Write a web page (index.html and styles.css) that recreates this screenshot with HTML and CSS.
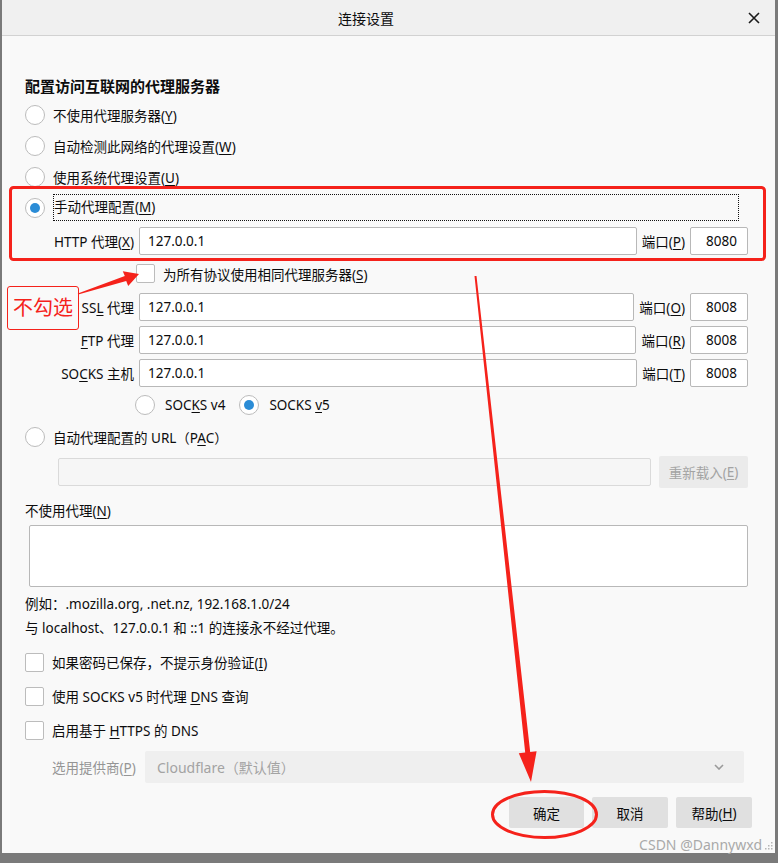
FILE: index.html
```html
<!DOCTYPE html>
<html lang="zh-CN">
  <head>
    <meta charset="UTF-8" />
    <meta name="viewport" content="width=device-width, initial-scale=1.0" />
    <title>连接设置</title>
    <link rel="stylesheet" href="styles.css">
  </head>
  <body>
    <div class="dialog">
      <div class="titlebar">
        <div class="title">连接设置</div>
        <svg class="close" width="12" height="12" viewBox="0 0 12 12">
          <path d="M1 1 L11 11 M11 1 L1 11" stroke="#1b1b1b" stroke-width="1.6" fill="none" />
        </svg>
      </div>

      <div class="content">
        <div class="heading">配置访问互联网的代理服务器</div>

        <div class="radio-row"><span class="radio"></span><span>不使用代理服务器(<u>Y</u>)</span></div>
        <div class="radio-row"><span class="radio"></span><span>自动检测此网络的代理设置(<u>W</u>)</span></div>
        <div class="radio-row"><span class="radio"></span><span>使用系统代理设置(<u>U</u>)</span></div>
        <div class="radio-row"><span class="radio checked"></span><span class="focused">手动代理配置(<u>M</u>)</span></div>

        <div class="field-row first">
          <span class="field-label">HTTP 代理(<u>X</u>)</span>
          <div class="input">127.0.0.1</div>
          <span class="port-label">端口(<u>P</u>)</span>
          <div class="input port">8080</div>
        </div>
        <div class="share-row"><span class="checkbox"></span><span>为所有协议使用相同代理服务器(<u>S</u>)</span></div>
        <div class="field-row">
          <span class="field-label">SS<u>L</u> 代理</span>
          <div class="input">127.0.0.1</div>
          <span class="port-label">端口(<u>O</u>)</span>
          <div class="input port">8008</div>
        </div>
        <div class="field-row">
          <span class="field-label"><u>F</u>TP 代理</span>
          <div class="input">127.0.0.1</div>
          <span class="port-label">端口(<u>R</u>)</span>
          <div class="input port">8008</div>
        </div>
        <div class="field-row">
          <span class="field-label">SO<u>C</u>KS 主机</span>
          <div class="input">127.0.0.1</div>
          <span class="port-label">端口(<u>T</u>)</span>
          <div class="input port">8008</div>
        </div>
        <div class="socks-row">
          <span class="radio"></span><span>SOC<u>K</u>S v4</span>
          <span class="radio checked v5"></span><span>SOCKS <u>v</u>5</span>
        </div>

        <div class="radio-row pac"><span class="radio"></span><span>自动代理配置的 URL（P<u>A</u>C）</span></div>
        <div class="pac-row">
          <div class="input disabled"></div>
          <div class="button disabled">重新载入(<u>E</u>)</div>
        </div>

        <div class="label">不使用代理(<u>N</u>)</div>
        <div class="textarea"></div>
        <div class="note">例如：.mozilla.org, .net.nz, 192.168.1.0/24</div>
        <div class="note">与 localhost、127.0.0.1 和 ::1 的连接永不经过代理。</div>

        <div class="check-row first"><span class="checkbox"></span><span>如果密码已保存，不提示身份验证(<u>I</u>)</span></div>
        <div class="check-row"><span class="checkbox"></span><span>使用 SOCKS v5 时代理 <u>D</u>NS 查询</span></div>
        <div class="check-row"><span class="checkbox"></span><span>启用基于 <u>H</u>TTPS 的 DNS</span></div>

        <div class="provider-row">
          <span class="provider-label">选用提供商(<u>P</u>)</span>
          <div class="select">
            <span>Cloudflare（默认值）</span>
            <svg width="10" height="6" viewBox="0 0 10 6"><path d="M1 1 L5 5 L9 1" stroke="#9a9a9a" stroke-width="1.6" fill="none" /></svg>
          </div>
        </div>

        <div class="buttons">
          <div class="button">确定</div>
          <div class="button">取消</div>
          <div class="button">帮助(<u>H</u>)</div>
        </div>
      </div>
    </div>

    <!-- annotations drawn over the screenshot -->
    <svg class="marks" width="778" height="863" viewBox="0 0 778 863">
      <rect x="10.5" y="187.5" width="754" height="72" rx="3" fill="none" stroke="#f5221b" stroke-width="3" />
      <polygon fill="#f5221b" points="77.8,293.5 124.8,276.1 122.8,271.3 139,274 128.2,285.9 126.2,281.1 78.2,294.5" />
      <polygon fill="#f5221b" points="474.5,276.1 476.5,275.9 530.2,751.9 536.6,751.2 531,782 518.8,753.2 525.2,752.5" />
      <ellipse cx="544.5" cy="814.5" rx="52" ry="23" fill="none" stroke="#f5221b" stroke-width="3" />
    </svg>
    <div class="tag">不勾选</div>
    <div class="watermark">
      CSDN @Dannywxd
      <svg width="8" height="9" viewBox="0 0 8 9">
        <rect x="6" y="1" width="1.5" height="1.5" fill="#b5b5b5" />
        <rect x="3" y="4" width="1.5" height="1.5" fill="#b5b5b5" />
        <rect x="6" y="4" width="1.5" height="1.5" fill="#b5b5b5" />
        <rect x="0" y="7" width="1.5" height="1.5" fill="#b5b5b5" />
        <rect x="3" y="7" width="1.5" height="1.5" fill="#b5b5b5" />
        <rect x="6" y="7" width="1.5" height="1.5" fill="#b5b5b5" />
      </svg>
    </div>
  </body>
</html>
```

FILE: styles.css
```css
* {
  box-sizing: border-box;
}

body {
  margin: 0;
  width: 778px;
  height: 863px;
  position: relative;
  overflow: hidden;
  background-color: #7a7a7a;
  font-family: "Noto Sans", "Noto Sans CJK SC", sans-serif;
  font-size: 13.5px;
  color: #0c0c0d;
}

u {
  text-underline-offset: 2px;
}

.dialog {
  margin-left: 2px;
  width: 773px;
  height: 853px;
  background-color: #f9f9f9;
  overflow: hidden;
}

.titlebar {
  height: 36px;
  display: flex;
  align-items: center;
  justify-content: center;
  padding-right: 45px;
  background-color: #f0f0f0;
  border-bottom: 1px solid #d2d2d2;
  position: relative;
}

.title {
  font-size: 14px;
  font-family: "Noto Sans CJK SC", sans-serif;
}

.close {
  position: absolute;
  right: 15px;
  top: 12px;
}

.content {
  padding: 0 27px 0 23px;
  display: flex;
  flex-direction: column;
}

.heading {
  margin-top: 40px;
  line-height: 20px;
  font-size: 15px;
  font-weight: 600;
}

.radio-row {
  height: 31px;
  display: flex;
  align-items: center;
}

.heading + .radio-row {
  margin-top: 3px;
}

.radio-row.pac {
  height: 32px;
}

.radio {
  width: 20px;
  height: 20px;
  flex: none;
  border: 1px solid #bcbcbc;
  border-radius: 50%;
  background-color: #fff;
  margin-right: 8px;
  display: flex;
  align-items: center;
  justify-content: center;
}

.radio.checked::after {
  content: "";
  width: 10px;
  height: 10px;
  border-radius: 50%;
  background-color: #2b8cd6;
}

.focused {
  flex: 1;
  height: 27px;
  line-height: 25px;
  margin-right: 9px;
  border: 1px dotted #111;
}

.field-row {
  height: 33px;
  display: flex;
  align-items: center;
  padding-left: 28px;
}

.field-row.first {
  margin-top: 1px;
}

.field-label {
  width: 81px;
  text-align: right;
  margin-right: 5px;
  white-space: nowrap;
}

.input {
  flex: 1;
  height: 28px;
  line-height: 26px;
  padding: 0 8px;
  background-color: #fff;
  border: 1px solid #b8b8b8;
  border-radius: 2px;
}

.input.port {
  flex: none;
  width: 58px;
  text-align: right;
  padding-right: 10px;
}

.port-label {
  margin: 0 5px;
  white-space: nowrap;
}

.share-row {
  height: 33px;
  display: flex;
  align-items: center;
  padding-left: 111px;
}

.checkbox {
  width: 19px;
  height: 19px;
  flex: none;
  background-color: #fff;
  border: 1px solid #bcbcbc;
  border-radius: 2px;
  margin-right: 8px;
}

.socks-row {
  height: 32px;
  display: flex;
  align-items: center;
  padding-left: 110px;
}

.socks-row .radio {
  margin-right: 10px;
}

.socks-row .radio.v5 {
  margin-left: 14px;
}

.pac-row {
  height: 38px;
  display: flex;
  align-items: center;
  padding-left: 33px;
}

.input.disabled {
  background-color: #f6f6f6;
  border-color: #dadada;
  margin-right: 8px;
}

.button {
  height: 31px;
  display: flex;
  align-items: center;
  justify-content: center;
  background-color: #e0e0e0;
  border-radius: 2px;
  white-space: nowrap;
}

.button.disabled {
  width: 89px;
  height: 32px;
  background-color: #ebebeb;
  color: #a3a3a3;
}

.label {
  margin-top: 10px;
  line-height: 20px;
}

.textarea {
  margin: 4px 0 0 4px;
  height: 62px;
  background-color: #fff;
  border: 1px solid #b8b8b8;
  border-radius: 2px;
}

.note {
  line-height: 24px;
}

.textarea + .note {
  margin-top: 5px;
}

.check-row {
  height: 34px;
  display: flex;
  align-items: center;
}

.check-row.first {
  margin-top: 5px;
}

.provider-row {
  height: 40px;
  display: flex;
  align-items: center;
  padding-left: 27px;
  margin-right: 4px;
}

.provider-label {
  width: 93px;
  color: #959595;
  white-space: nowrap;
}

.select {
  flex: 1;
  height: 32px;
  display: flex;
  align-items: center;
  justify-content: space-between;
  padding: 0 20px 0 12px;
  background-color: #efefef;
  border-radius: 2px;
  color: #a3a3a3;
  font-size: 14px;
}

.buttons {
  margin-top: 10px;
  margin-right: -4px;
  display: flex;
  justify-content: flex-end;
  gap: 8px;
}

.buttons .button {
  width: 76px;
}

.buttons .button:first-child {
  width: 75px;
}

.marks {
  position: absolute;
  left: 0;
  top: 0;
  pointer-events: none;
}

.tag {
  position: absolute;
  left: 7px;
  top: 286px;
  width: 72px;
  height: 44px;
  border: 1px solid #f5221b;
  border-radius: 3px;
  color: #f5221b;
  font-family: "Noto Sans CJK SC", sans-serif;
  font-size: 20px;
  line-height: 40px;
  text-align: center;
}

.watermark {
  position: absolute;
  right: 5px;
  top: 835px;
  display: flex;
  align-items: center;
  gap: 3px;
  color: #a9a9a9;
  font-size: 14px;
  line-height: 20px;
}
```
